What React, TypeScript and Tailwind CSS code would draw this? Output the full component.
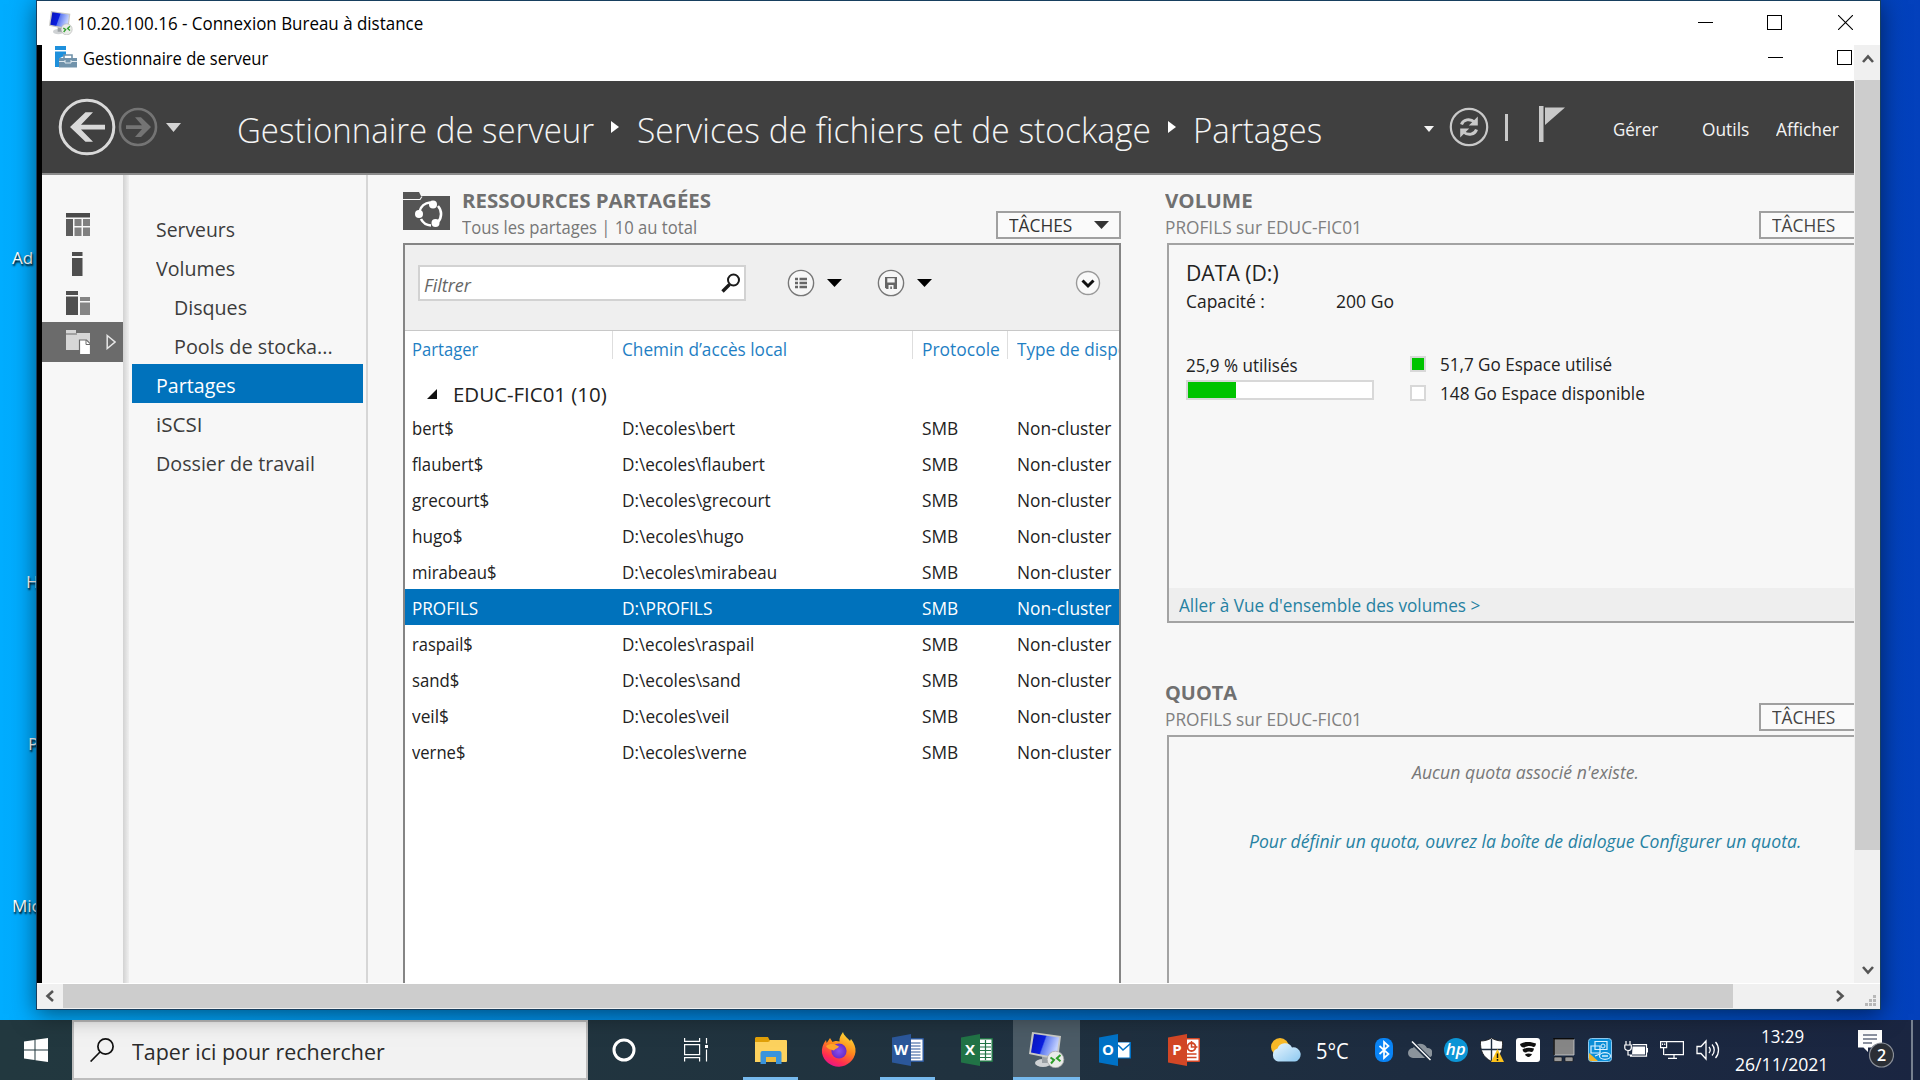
import { useLayoutEffect, useRef, useState } from "react";
import type { ReactNode } from "react";

/* Text run that is condensed or stretched to a given width. */
function T({ w, className = "", children }: { w: number; className?: string; children: ReactNode }) {
  const ref = useRef<HTMLSpanElement>(null);
  const [scale, setScale] = useState(1);
  useLayoutEffect(() => {
    if (ref.current && ref.current.offsetWidth > 0) setScale((w + 1.5) / ref.current.offsetWidth);
  }, [w]);
  return (
    <span className={`block shrink-0 whitespace-nowrap ${className}`} style={{ width: w }}>
      <span ref={ref} className="-ml-px inline-block origin-left" style={{ transform: `scaleX(${scale})` }}>
        {children}
      </span>
    </span>
  );
}

function Caret({ className = "" }: { className?: string }) {
  return (
    <svg viewBox="0 0 14 8" className={`shrink-0 ${className}`} preserveAspectRatio="none" fill="currentColor">
      <path d="M0 0h14L7 8z" />
    </svg>
  );
}

function RdpIcon({ className }: { className: string }) {
  return (
    <svg viewBox="0 0 36 36" className={className}>
      <defs>
        <linearGradient id="scr" x1="0" y1="0" x2="1" y2="0.3">
          <stop offset="0" stopColor="#0a14b4" />
          <stop offset="0.5" stopColor="#0a1ee0" />
          <stop offset="0.55" stopColor="#5c78f0" />
          <stop offset="1" stopColor="#c4d2ff" />
        </linearGradient>
      </defs>
      <ellipse cx="14" cy="31" rx="8" ry="4" fill="#cfd2d4" />
      <path d="M13 24l7 2v5h-7z" fill="#9aa0a4" />
      <path d="M3 0l29 4-3 24L0 22z" fill="#c9c9c4" />
      <path d="M5 2l25 3.600-2.600 20L2 20.500z" fill="url(#scr)" />
      <circle cx="26.500" cy="27.500" r="8.300" fill="#e9ebe8" stroke="#aaa" strokeWidth="0.8" />
      <path d="M21.500 25.500l3.500 2.500-3 3.500M31.500 23l-3.600 3.200 3.600 3" fill="none" stroke="#2f9e2a" strokeWidth="2" />
    </svg>
  );
}

function ManagerIcon() {
  return (
    <svg viewBox="0 0 22 22" className="mt-px h-[22px] w-[22px] shrink-0">
      <path d="M0 0h11v4H0zM0 5.500h11V9L5 12v9H0z" fill="#1e90dc" />
      <path d="M4 12h18v9.500H4z" fill="#7193ab" />
      <path d="M9 12V9h8v3" fill="none" stroke="#7193ab" strokeWidth="1.600" />
      <path d="M4 15.500h6M16 15.500h6M10 14v3h6v-3" fill="none" stroke="#dfe8ee" strokeWidth="1" />
    </svg>
  );
}

const railIcons: ReactNode[] = [
  <svg key="a" viewBox="0 0 24 24" className="h-6 w-6">
    <path d="M0 0h24v4.500H0z" fill="#4a4a4a" />
    <path d="M0 6h7v17H0z" fill="#5c5c5c" />
    <path d="M8.500 6h7v7h-7zM17 6h7v7h-7zM8.500 14.500h7V23h-7zM17 14.500h7V23h-7z" fill="#808080" />
  </svg>,
  <svg key="b" viewBox="0 0 24 24" className="h-6 w-6">
    <path d="M6 0h10.500v4H6zM6 6h10.500v18H6z" fill="#4f4f4f" />
  </svg>,
  <svg key="c" viewBox="0 0 24 24" className="h-6 w-6">
    <path d="M0 0h12v4H0zM0 5.500h12V24H0z" fill="#4f4f4f" />
    <path d="M14 6h10v4H14zM14 11.500h10V24H14z" fill="#858585" />
  </svg>,
];

const nav = [
  { t: "Serveurs", w: 78, c: "pl-[25px] text-[#3c3c3c]" },
  { t: "Volumes", w: 78, c: "pl-[25px] text-[#3c3c3c]" },
  { t: "Disques", w: 72, c: "pl-[43px] text-[#3c3c3c]" },
  { t: "Pools de stocka...", w: 157, c: "pl-[43px] text-[#3c3c3c]" },
  { t: "Partages", w: 78, c: "pl-[25px] bg-[#0072bc] text-white" },
  { t: "iSCSI", w: 45, c: "pl-[25px] text-[#3c3c3c]" },
  { t: "Dossier de travail", w: 158, c: "pl-[25px] text-[#3c3c3c]" },
];

const shares: [string, number, string, number][] = [
  ["bert$", 40, "D:\\ecoles\\bert", 112],
  ["flaubert$", 70, "D:\\ecoles\\flaubert", 141],
  ["grecourt$", 76, "D:\\ecoles\\grecourt", 147],
  ["hugo$", 49, "D:\\ecoles\\hugo", 120],
  ["mirabeau$", 83, "D:\\ecoles\\mirabeau", 154],
  ["PROFILS", 65, "D:\\PROFILS", 89],
  ["raspail$", 59, "D:\\ecoles\\raspail", 131],
  ["sand$", 46, "D:\\ecoles\\sand", 117],
  ["veil$", 35, "D:\\ecoles\\veil", 106],
  ["verne$", 52, "D:\\ecoles\\verne", 123],
];

function MinMax({ close, className }: { close: boolean; className: string }) {
  return (
    <div className={`flex shrink-0 items-center ${className}`}>
      <div className="h-px w-[15px] bg-black" />
      <div className="ml-[54px] h-[15px] w-[15px] border border-black" />
      {close && (
        <svg viewBox="0 0 15 15" className="ml-[56px] h-[15px] w-[15px]" stroke="#000" strokeWidth="1.100">
          <path d="M0 0l15 15M15 0L0 15" />
        </svg>
      )}
    </div>
  );
}

function Header() {
  return (
    <header className="flex h-[94px] shrink-0 items-center border-b-2 border-[#8c8c8c] bg-[#404040] pl-4 text-[#f4f4f4]">
      <svg viewBox="0 0 58 58" className="h-[58px] w-[58px] shrink-0" fill="none">
        <circle cx="29" cy="29" r="26.800" stroke="#d9d9d9" strokeWidth="3" />
        <path d="M47 26.800v4.600H23l12 12.300h-7.500L12 29l15.500-14.700H35L23 26.800z" fill="#d9d9d9" />
      </svg>
      <svg viewBox="0 0 40 40" className="ml-[2px] h-10 w-10 shrink-0" fill="none">
        <circle cx="20" cy="20" r="18" stroke="#747474" strokeWidth="2.600" />
        <path d="M8 18.300v3.600h16l-7 8h6L33 20l-10-9.800h-6l7 8.100z" fill="#747474" />
      </svg>
      <Caret className="ml-2 h-[9px] w-[15px] text-[#d4d4d4]" />
      <T w={356} className="ml-[57px] pt-[6px] text-[35px] leading-[44px] font-light">Gestionnaire de serveur</T>
      <svg viewBox="0 0 8 12" className="ml-[17px] h-3 w-2 shrink-0" fill="#fff"><path d="M0 0l8 6-8 6z" /></svg>
      <T w={512} className="ml-[19px] pt-[6px] text-[35px] leading-[44px] font-light">Services de fichiers et de stockage</T>
      <svg viewBox="0 0 8 12" className="ml-[18px] h-3 w-2 shrink-0" fill="#fff"><path d="M0 0l8 6-8 6z" /></svg>
      <T w={128} className="ml-[18px] pt-[6px] text-[35px] leading-[44px] font-light">Partages</T>
      <Caret className="ml-[102px] mt-1 h-[6px] w-[10px]" />
      <svg viewBox="0 0 40 40" className="ml-[15px] h-10 w-10 shrink-0" fill="none">
        <circle cx="20" cy="20" r="18.200" stroke="#c9c9c9" strokeWidth="2.200" />
        <path d="M12.500 17.500c1.500-5 8.500-6.500 13-2.500M27.500 22.500c-1.500 5-8.500 6.500-13 2.500" stroke="#c9c9c9" strokeWidth="3" />
        <path d="M28.800 9.500v9h-9zM11.200 30.500v-9h9z" fill="#c9c9c9" />
      </svg>
      <div className="ml-4 h-[27px] w-[3px] bg-[#c9c9c9]" />
      <svg viewBox="0 0 26 36" className="-mt-1.5 ml-[31px] h-9 w-[26px] shrink-0" fill="#c9c9c9">
        <path d="M0 0h4.500v36H0zM6 1.500h20L6 19z" />
      </svg>
      <T w={44} className="ml-[49px] pt-[4px] text-[17.500px]">Gérer</T>
      <T w={46} className="ml-[45px] pt-[4px] text-[17.500px]">Outils</T>
      <T w={61} className="ml-[28px] pt-[4px] text-[17.500px]">Afficher</T>
    </header>
  );
}

function Sidebar() {
  return (
    <>
      <div className="flex w-[81px] shrink-0 flex-col bg-[#f7f7f7] pt-[38px]">
        {railIcons.map((icon, i) => (
          <div key={i} className="flex h-[39px] pl-6">{icon}</div>
        ))}
        <div className="-mt-[8px] flex h-10 items-center bg-[#6b6b6b] pl-6">
          <svg viewBox="0 0 24 24" className="h-6 w-6">
            <path d="M0 0h10v3h14v17H0z" fill="#d6d6d6" />
            <path d="M0 4h11" stroke="#6b6b6b" strokeWidth="1" />
            <path d="M13.500 10h7l4 4v10.500h-11z" fill="#fff" stroke="#6b6b6b" strokeWidth="1.200" />
            <path d="M20 10v4.500h4" fill="none" stroke="#6b6b6b" strokeWidth="1" />
          </svg>
          <svg viewBox="0 0 10 16" className="ml-4 h-4 w-[10px]" fill="none" stroke="#e6e6e6" strokeWidth="1.500">
            <path d="M1.200 1.500L9 8l-7.800 6.500z" />
          </svg>
        </div>
      </div>
      <div className="w-[6px] shrink-0 bg-linear-to-r from-[#d2d2d2] to-[#efefef]" />
      <nav className="w-[239px] shrink-0 border-r-2 border-[#d6d6d6] bg-[#f7f7f7] px-[3px] pt-[33px]">
        {nav.map((n) => (
          <div key={n.t} className={`flex h-[39px] items-center pt-[5px] text-[19.500px] leading-[34px] ${n.c}`}>
            <T w={n.w}>{n.t}</T>
          </div>
        ))}
      </nav>
    </>
  );
}

function ListPanel() {
  return (
    <section className="ml-[35px] flex w-[718px] shrink-0 flex-col">
      <div className="flex h-[68px] shrink-0">
        <svg viewBox="0 0 47 38" className="mt-[17px] h-[38px] w-[47px] shrink-0">
          <path d="M0 0h16l2 4h29v34H0z" fill="#555" />
          <path d="M0 7.500h17l2-3" fill="none" stroke="#f7f7f7" strokeWidth="1.200" />
          <path d="M27 10.500a12 12 0 0 0-10.500 9M18 27a12 12 0 0 0 10 6.500M35 30a12 12 0 0 0 0-16" fill="none" stroke="#fff" strokeWidth="2.600" />
          <circle cx="30" cy="12.500" r="4" fill="#fff" />
          <circle cx="16" cy="22" r="4" fill="#fff" />
          <circle cx="32.500" cy="31" r="4" fill="#fff" />
        </svg>
        <div className="mt-[12px] ml-[13px] w-[533px]">
          <T w={248} className="text-[19.500px] leading-7 font-bold text-[#707070]">RESSOURCES PARTAGÉES</T>
          <T w={234} className="text-[18px] leading-6 text-[#777]">Tous les partages | 10 au total</T>
        </div>
        <div className="mt-[36px] flex h-[28px] w-[125px] items-center border-2 border-[#a0a0a0] bg-[#fafafa] pl-[12px] text-[#333]">
          <T w={62} className="text-[18px] leading-6">TÂCHES</T>
          <Caret className="ml-[22px] h-2 w-[15px]" />
        </div>
      </div>
      <div className="flex flex-1 flex-col overflow-hidden border-x-2 border-t-2 border-[#858585] bg-white">
        <div className="flex h-[86px] shrink-0 items-center border-b border-[#c8c8c8] bg-[#efefef] pr-[18px] pb-[9px] pl-[13px]">
          <div className="flex h-9 w-[328px] shrink-0 items-center border-2 border-[#d2d2d2] bg-white pr-[3px] pl-[5px]">
            <T w={46} className="pt-[3px] text-[17.500px] leading-7 text-[#666] italic">Filtrer</T>
            <svg viewBox="0 0 20 20" className="ml-auto h-5 w-5" fill="none" stroke="#1a1a1a">
              <circle cx="12.500" cy="7" r="5.500" strokeWidth="2" />
              <path d="M8.500 11.500L1.500 18.500" strokeWidth="3.400" />
            </svg>
          </div>
          <svg viewBox="0 0 28 28" className="ml-[41px] h-7 w-7 shrink-0">
            <circle cx="14" cy="14" r="12.600" fill="#f6f6f6" stroke="#777" strokeWidth="1.400" />
            <path d="M8 10h3M8 14h3M8 18h3M12.500 10H20M12.500 14H20M12.500 18H20" stroke="#666" strokeWidth="2.400" />
          </svg>
          <Caret className="ml-[12px] h-2 w-[15px]" />
          <svg viewBox="0 0 28 28" className="ml-[35px] h-7 w-7 shrink-0">
            <circle cx="14" cy="14" r="12.600" fill="#f6f6f6" stroke="#777" strokeWidth="1.400" />
            <path d="M8 8h12v12H9.500L8 18.500z" fill="#666" />
            <path d="M10.300 9.200h7.400v4.300h-7.400zM11.500 16h5v4h-1.600v-2.600h-1.600V20h-1.800z" fill="#f6f6f6" />
          </svg>
          <Caret className="ml-[12px] h-2 w-[15px]" />
          <svg viewBox="0 0 26 26" className="ml-auto h-[26px] w-[26px] shrink-0" fill="none">
            <circle cx="13" cy="13" r="11.500" fill="#f9f9f9" stroke="#999" strokeWidth="1.400" />
            <path d="M7.500 10.500l5.500 5.500 5.500-5.500" stroke="#111" strokeWidth="3" />
          </svg>
        </div>
        <div className="flex h-9 shrink-0 text-[18px] leading-[36px] text-[#1f7fc4]">
          <div className="flex h-7 w-[208px] shrink-0 border-r border-[#dedede] pl-2"><T w={65}>Partager</T></div>
          <div className="flex h-7 w-[300px] shrink-0 border-r border-[#dedede] pl-[10px]"><T w={164}>Chemin d’accès local</T></div>
          <div className="flex h-7 w-[95px] shrink-0 border-r border-[#dedede] pl-[10px]"><T w={76}>Protocole</T></div>
          <div className="flex h-7 pl-[10px]"><T w={110}>Type de dispo</T></div>
        </div>
        <div className="flex h-[42px] shrink-0 items-center pt-3 pl-[22px]">
          <svg viewBox="0 0 10 10" className="h-[10px] w-[10px]" fill="#111"><path d="M10 0v10H0z" /></svg>
          <T w={152} className="ml-[17px] text-[20.500px] leading-6 text-[#222]">EDUC-FIC01 (10)</T>
        </div>
        {shares.map(([name, nw, path, pw]) => (
          <div
            key={name}
            className={`flex h-9 shrink-0 items-center pt-[2px] text-[18px] leading-8 ${name === "PROFILS" ? "bg-[#0072bc] text-white" : "text-[#222]"}`}
          >
            <div className="w-[209px] pl-2"><T w={nw}>{name}</T></div>
            <div className="w-[300px] pl-[9px]"><T w={pw}>{path}</T></div>
            <div className="w-[94px] pl-[9px]"><T w={35}>SMB</T></div>
            <div className="pl-[10px]"><T w={93}>Non-cluster</T></div>
          </div>
        ))}
      </div>
    </section>
  );
}

function SideHead({ title, w, className }: { title: string; w: number; className: string }) {
  return (
    <div className={`flex shrink-0 ${className}`}>
      <div className="mt-[12px] w-[592px] shrink-0">
        <T w={w} className="-ml-px text-[19.500px] leading-7 font-bold text-[#707070]">{title}</T>
        <T w={195} className="-ml-px text-[18px] leading-6 text-[#808080]">PROFILS sur EDUC-FIC01</T>
      </div>
      <div className="mt-[36px] flex h-[28px] w-[125px] shrink-0 items-center border-2 border-[#a0a0a0] bg-[#fafafa] pl-[12px] text-[#444]">
        <T w={62} className="text-[18px] leading-6">TÂCHES</T>
      </div>
    </div>
  );
}

function Legend({ color, text, w }: { color: string; text: string; w: number }) {
  return (
    <div className="flex h-[29px] items-center">
      <div className={`h-4 w-4 border-2 border-[#d8d8d8] ${color}`} />
      <T w={w} className="ml-[15px] text-[18px] leading-7">{text}</T>
    </div>
  );
}

function RightColumn() {
  return (
    <section className="ml-[46px] flex w-[720px] shrink-0 flex-col">
      <SideHead title="VOLUME" w={86} className="h-[68px]" />
      <div className="flex h-[380px] shrink-0 flex-col border-2 border-[#a3a3a3] text-[#222]">
        <div className="pt-[13px] pl-[18px]">
          <T w={91} className="text-[21.500px] leading-[29px]">DATA (D:)</T>
          <div className="flex pt-[1px] text-[18px] leading-[26px]">
            <T w={77}>Capacité :</T>
            <T w={56} className="ml-[73px]">200 Go</T>
          </div>
          <div className="flex pt-[35px]">
            <div className="w-[223px] pt-[1px]">
              <T w={110} className="text-[18px] leading-[30px]">25,9 % utilisés</T>
              <div className="-ml-px h-5 w-[188px] border-2 border-[#d8d8d8] bg-white">
                <div className="h-full w-[26%] bg-[#00c400]" />
              </div>
            </div>
            <div>
              <Legend color="bg-[#00c400]" text="51,7 Go Espace utilisé" w={171} />
              <Legend color="bg-white" text="148 Go Espace disponible" w={203} />
            </div>
          </div>
        </div>
        <div className="mt-auto flex h-[33px] items-center bg-[#eee] pl-[11px]">
          <T w={300} className="pt-px text-[18px] leading-8 text-[#2681a2]">Aller à Vue d'ensemble des volumes &gt;</T>
        </div>
      </div>
      <div className="h-[44px] shrink-0" />
      <SideHead title="QUOTA" w={71} className="h-[68px]" />
      <div className="flex-1 border-x-2 border-t-2 border-[#a3a3a3] pt-[18px] text-[18px] leading-[34px] italic">
        <T w={225} className="ml-[244px] text-[#777]">Aucun quota associé n'existe.</T>
        <T w={551} className="mt-[35px] ml-[81px] text-[#2681a2]">Pour définir un quota, ouvrez la boîte de dialogue Configurer un quota.</T>
      </div>
    </section>
  );
}

function Chevron({ d, className = "" }: { d: string; className?: string }) {
  return (
    <svg viewBox="0 0 12 12" className={`h-3 w-3 shrink-0 ${className}`} fill="none" stroke="#555" strokeWidth="2.600">
      <path d={d} />
    </svg>
  );
}

function RemoteWindow() {
  return (
    <div className="relative flex h-[1010px] w-[1845px] flex-col border border-[#173f5f] bg-[#f0f0f0] shadow-[0_4px_22px_rgba(0,0,0,0.5)]">
      <div className="flex h-11 shrink-0 items-center bg-white pl-[12px]">
        <RdpIcon className="h-6 w-6 shrink-0" />
        <T w={345} className="ml-[5px] pt-px text-[18px] text-black">10.20.100.16 - Connexion Bureau à distance</T>
        <MinMax close className="mr-[27px] mb-px ml-auto" />
      </div>
      <div className="flex h-[938px] shrink-0">
        <div className="w-[5px] shrink-0 bg-black" />
        <div className="flex w-[1812px] shrink-0 flex-col overflow-hidden bg-[#f7f7f7]">
          <div className="flex h-9 shrink-0 items-start bg-white pl-[13px]">
            <ManagerIcon />
            <T w={184} className="ml-[7px] text-[18px] leading-[26px] text-black">Gestionnaire de serveur</T>
            <MinMax close={false} className="mt-[5px] mr-[2px] ml-auto" />
          </div>
          <Header />
          <div className="flex min-h-0 flex-1 overflow-hidden">
            <Sidebar />
            <ListPanel />
            <RightColumn />
          </div>
        </div>
        <div className="ml-px flex w-[25px] shrink-0 flex-col items-center bg-[#f0f0f0]">
          <Chevron d="M1 9l5-5.500L11 9" className="mt-[8px]" />
          <div className="mt-[15px] h-[770px] w-full bg-[#cdcdcd]" />
          <Chevron d="M1 3l5 5.500L11 3" className="mt-auto mb-[7px]" />
        </div>
      </div>
      <div className="flex h-[25px] shrink-0 items-center border-t border-white">
        <Chevron d="M9 1L3.500 6 9 11" className="ml-[7px]" />
        <div className="ml-[7px] h-full w-[1670px] bg-[#cdcdcd]" />
        <Chevron d="M3 1l5.500 5L3 11" className="ml-[101px]" />
        <svg viewBox="0 0 12 12" className="mt-2 ml-auto mr-1 h-3 w-3" fill="#b8b8b8">
          <path d="M9 1h3v3H9zM5 5h3v3H5zM9 5h3v3H9zM1 9h3v3H1zM5 9h3v3H5zM9 9h3v3H9z" />
        </svg>
      </div>
    </div>
  );
}

function OfficeIcon({ letter, dark, light, children, className }: { letter: string; dark: string; light: string; children: ReactNode; className: string }) {
  return (
    <svg viewBox="0 0 32 32" className={`h-8 w-8 shrink-0 ${className}`}>
      <rect x="17" y="4" width="15" height="24" rx="1" fill={light} />
      {children}
      <path d="M0 3.500L19 0v32L0 28.500z" fill={dark} />
      <text x="9" y="21" textAnchor="middle" fill="#fff" fontFamily="Open Sans, sans-serif" fontWeight="700" fontSize="15">{letter}</text>
    </svg>
  );
}

function Taskbar() {
  return (
    <footer className="flex h-[60px] w-full shrink-0 items-center overflow-hidden bg-linear-to-r from-[#22383f] via-[#20323f] to-[#1a2541] text-white">
      <div className="flex w-[72px] shrink-0 pl-6">
        <svg viewBox="0 0 24 24" className="h-6 w-6" fill="#fff">
          <path d="M0 3.500l10.500-1.500v9.500H0zM11.500 1.800L24 0v11.500H11.500zM0 12.500h10.500V22L0 20.500zM11.500 12.500H24V24l-12.500-1.800z" />
        </svg>
      </div>
      <div className="flex h-full w-[516px] shrink-0 items-center border-2 border-[#bdbdbd] bg-[#f2f2f2] pl-4">
        <svg viewBox="0 0 24 24" className="h-6 w-6" fill="none" stroke="#111" strokeWidth="1.700">
          <circle cx="15.500" cy="8.500" r="7.600" />
          <path d="M10 14L.6 23.500" />
        </svg>
        <T w={251} className="ml-[19px] pt-[3px] text-[22px] text-[#2b2b2b]">Taper ici pour rechercher</T>
      </div>
      <svg viewBox="0 0 24 24" className="ml-6 h-6 w-6 shrink-0" fill="none" stroke="#fff" strokeWidth="3">
        <circle cx="12" cy="12" r="10" />
      </svg>
      <svg viewBox="0 0 24 24" className="ml-12 h-6 w-6 shrink-0" fill="none" stroke="#fff" strokeWidth="1.200">
        <path d="M.6 0v3.400h15V0M.6 6.600h15v10H.6zM.6 23.500v-3.800h15v3.800M22.500 0v5.500M22.500 11.500v12" />
        <path d="M21 7h3v3h-3z" fill="#fff" stroke="none" />
      </svg>
      <div className="ml-[35px] flex h-full w-[55px] shrink-0 items-center justify-center border-b-[3px] border-[#76b9ed] pt-[3px]">
        <svg viewBox="0 0 32 27" className="h-[27px] w-8">
          <path d="M0 3h31a1 1 0 0 1 1 1v20a1 1 0 0 1-1 1H0z" fill="#fdd25e" />
          <path d="M1 0h12l2 4-2 1H0V1z" fill="#e0a008" />
          <path d="M5.500 27V16a2 2 0 0 1 2-2h17a2 2 0 0 1 2 2v11h-5.500v-7H11v7z" fill="#3a94dc" />
          <path d="M11 20h10v5H11z" fill="#eebb3c" />
        </svg>
      </div>
      <svg viewBox="0 0 36 36" className="ml-[23px] h-9 w-9 shrink-0">
        <defs>
          <linearGradient id="ff" x1="0.800" y1="0" x2="0.300" y2="1">
            <stop offset="0" stopColor="#ffe63c" />
            <stop offset="0.450" stopColor="#ff8a1c" />
            <stop offset="0.800" stopColor="#ff2d50" />
            <stop offset="1" stopColor="#e6148c" />
          </linearGradient>
          <radialGradient id="ffp"><stop offset="0" stopColor="#8a50f0" /><stop offset="1" stopColor="#6a2cc8" /></radialGradient>
        </defs>
        <path d="M22 0c1 4 5 6 7 9l1-2c3 4 5 8 4.500 13A17 17 0 0 1 1 21c-.6-5 1-9 4-13l.7 3L9 6l2.500 4c3-1.500 5-1 7-.500C18 6 20 3 22 0z" fill="url(#ff)" />
        <circle cx="18" cy="19" r="7.600" fill="url(#ffp)" />
        <path d="M5 14c4-3 8-2 10-1l3 1.500c-1 2-4 2-5 4-3-1-6-1-8-4.500z" fill="#ffa42a" />
      </svg>
      <div className="ml-[23px] flex h-full w-[55px] shrink-0 items-center justify-center border-b-[3px] border-[#76b9ed] pt-[3px]">
        <OfficeIcon letter="W" dark="#2b579a" light="#2b579a" className="">
          <path d="M19 5.500h11.500v21H19z" fill="#fff" />
          <path d="M19 9h9.500M19 12h9.500M19 15h9.500M19 18h9.500M19 21h9.500M19 24h9.500" stroke="#2b579a" strokeWidth="1.200" />
        </OfficeIcon>
      </div>
      <OfficeIcon letter="X" dark="#217346" light="#217346" className="ml-[26px]">
        <path d="M19 5.500h11.500v21H19z" fill="#fff" />
        <path d="M19 9.500h11M19 13h11M19 16.500h11M19 20h11M19 23.500h11M24.500 6v20" stroke="#217346" strokeWidth="1.200" />
      </OfficeIcon>
      <div className="ml-5 flex h-full w-[67px] shrink-0 items-center justify-center border-b-[3px] border-[#76b9ed] bg-[#4b5b66] pt-[3px]">
        <RdpIcon className="h-9 w-9" />
      </div>
      <OfficeIcon letter="O" dark="#0072c6" light="#0072c6" className="ml-[19px]">
        <path d="M17 0h15v8H17zM17 24.500h15V32H17z" fill="#202f3f" />
        <path d="M19 8.500h11.500v15H19z" fill="#fff" />
        <path d="M19 11l5 5 7-6" fill="none" stroke="#0072c6" strokeWidth="1.600" />
      </OfficeIcon>
      <OfficeIcon letter="P" dark="#d24726" light="#d24726" className="ml-[37px]">
        <path d="M19 5.500h11.500v21H19z" fill="#fff" />
        <circle cx="23.500" cy="13" r="4" fill="none" stroke="#d24726" strokeWidth="1.800" />
        <path d="M23.500 7v6h6M19 20h9.500M19 23.500h9.500" fill="none" stroke="#d24726" strokeWidth="1.500" />
      </OfficeIcon>
      <svg viewBox="0 0 30 24" className="ml-[71px] h-6 w-[30px] shrink-0">
        <defs><linearGradient id="cl" x1="0" y1="0" x2="1" y2="1"><stop offset="0" stopColor="#eaf6ff" /><stop offset="1" stopColor="#8cc8f0" /></linearGradient></defs>
        <circle cx="9" cy="9" r="9" fill="#f8b928" />
        <path d="M7 23.500a6.800 6.800 0 0 1-.5-13A8 8 0 0 1 21 9.500a7 7 0 0 1 3 14z" fill="url(#cl)" />
      </svg>
      <T w={31} className="ml-4 pt-[4px] text-[21px]">5°C</T>
      <svg viewBox="0 0 18 24" className="ml-[27px] h-6 w-[18px] shrink-0" fill="none">
        <rect width="18" height="24" rx="8" fill="#0a84f5" />
        <path d="M4.500 8l9 8L9 20V4l4.500 4-9 8" stroke="#fff" strokeWidth="1.700" />
      </svg>
      <svg viewBox="0 0 24 24" className="ml-[15px] h-6 w-6 shrink-0">
        <path d="M5 20a5 5 0 0 1 0-10 8 8 0 0 1 14 0 5 5 0 0 1 1 10z" fill="#8b949c" />
        <path d="M3.500 3.500l19 19" stroke="#1e2d3f" strokeWidth="4" />
        <path d="M4 3.500l18.500 18.500" stroke="#fff" strokeWidth="1.500" />
      </svg>
      <svg viewBox="0 0 24 24" className="ml-3 h-6 w-6 shrink-0">
        <circle cx="12" cy="12" r="12" fill="#0d96d6" />
        <text x="11.800" y="17" textAnchor="middle" fill="#fff" fontFamily="Open Sans, sans-serif" fontStyle="italic" fontWeight="600" fontSize="17">hp</text>
      </svg>
      <svg viewBox="0 0 24 24" className="ml-3 h-6 w-6 shrink-0">
        <path d="M11.500 0c3 2 7 3 11 3 .5 10-2 16-11 20.500C3 19 .2 13 .5 3c4 0 8-1 11-3z" fill="#fff" stroke="#111" strokeWidth="0.800" />
        <path d="M11.500 1v22M1 11.500h21" stroke="#1e2d3f" strokeWidth="1.400" />
        <path d="M17.500 11L24 24H11z" fill="#fcc21b" />
        <path d="M17.500 15.500v4.500M17.500 21v1.800" stroke="#111" strokeWidth="1.500" />
      </svg>
      <svg viewBox="0 0 24 24" className="ml-3 h-6 w-6 shrink-0">
        <rect width="24" height="24" rx="3" fill="#fff" />
        <path d="M4 6c5-3 11-2.500 16-.500-.3 2.500-1 3.500-2.500 3.500-3-1.500-6-1.500-9 .5C6 10 4.500 8.500 4 6zM6.500 11.500c4-2.500 8-2 11.500-1-.5 2.500-1.200 3.500-2.500 3.500-2-1-4-.7-5.500.5-2 .3-3-1-3.500-3zM9 16.500c2-1.500 4.500-1.200 7-.5-.8 1.800-2 2.800-3.500 3-1.500-.3-3-1.200-3.500-2.500z" fill="#111" />
      </svg>
      <svg viewBox="0 0 24 24" className="ml-3 h-6 w-6 shrink-0">
        <path d="M2 1h20v16H2z" fill="#868686" stroke="#cfcfcf" strokeWidth="0.800" />
        <path d="M2 17V.7h20" fill="none" stroke="#0b0b0b" strokeWidth="1.500" />
        <rect x="2" y="19" width="8" height="4.500" rx="1" fill="#999" stroke="#111" strokeWidth="0.600" />
        <rect x="13" y="19" width="8" height="4.500" rx="1" fill="#999" stroke="#111" strokeWidth="0.600" />
      </svg>
      <svg viewBox="0 0 24 24" className="ml-3 h-6 w-6 shrink-0" fill="none">
        <rect x="0.500" y="0.500" width="23" height="23" rx="3" fill="#0c8fd8" stroke="#8fc9ee" />
        <path d="M1 15l9 8H3a2 2 0 0 1-2-2z" fill="#f0b429" />
        <path d="M7 3.500h12v8H7zM3 8h9v7H3zM7 18l5-2" stroke="#d8f0ff" strokeWidth="1.200" />
        <circle cx="15" cy="8" r="2" stroke="#d8f0ff" />
        <ellipse cx="17" cy="18" rx="5.500" ry="3.300" stroke="#d8f0ff" strokeWidth="1.200" />
        <path d="M14 18h6" stroke="#d8f0ff" strokeWidth="1.500" />
      </svg>
      <svg viewBox="0 0 24 24" className="ml-3 h-6 w-6 shrink-0" fill="none" stroke="#fff" strokeWidth="1.200">
        <path d="M8.500 6.600h14v11.500H6M23.500 10v4.500M2 3v4M6 3v4M.8 7h6.500v3c0 1.500-1.500 2.500-3.200 2.500S.8 11.500.8 10zM4 12.500V17h4" />
        <path d="M8.500 8.500h12.500v8H8z" fill="#fff" stroke="none" />
      </svg>
      <svg viewBox="0 0 24 24" className="ml-3 h-6 w-6 shrink-0" fill="none" stroke="#fff" strokeWidth="1.200">
        <path d="M7 3.600h16.400v13H4.500M14 16.600v3.500M8 20.400h9M.6 3.600h6v6h-6zM3.600 9.600v7.500M2.500 5.500v1.500M4.700 5.500v1.500" />
      </svg>
      <svg viewBox="0 0 24 24" className="ml-3 h-6 w-6 shrink-0" fill="none" stroke="#fff" strokeWidth="1.300">
        <path d="M1 8.500h4l5-5.500v18l-5-5.500H1zM13 9c1.500 1.800 1.500 4.200 0 6M16 6.500c3 3 3 8 0 11M19.500 4c4 4.500 4 11.500 0 16" />
      </svg>
      <div className="ml-4 flex w-[92px] shrink-0 flex-col items-center text-[17.500px] leading-7">
        <T w={42} className="ml-px">13:29</T>
        <T w={92}>26/11/2021</T>
      </div>
      <svg viewBox="0 0 36 40" className="ml-[30px] h-10 w-9 shrink-0">
        <path d="M0 1h24v18.500H10V24l-4.500-4.500H0z" fill="#fff" transform="translate(0 -2)" />
        <path d="M5 5h14M5 9h14M5 13h9" stroke="#1b2742" strokeWidth="1.200" />
        <circle cx="23.500" cy="25" r="12" fill="#2b2f36" stroke="#8a8f98" strokeWidth="1.200" />
        <text x="23.500" y="31" textAnchor="middle" fill="#fff" fontFamily="Open Sans, sans-serif" fontWeight="600" fontSize="16">2</text>
      </svg>
      <div className="ml-[17px] h-full w-[2px] shrink-0 bg-[#76808f]" />
    </footer>
  );
}

const labels = [
  { t: "Ad", c: "left-[12px] top-[246px]" },
  { t: "H", c: "left-[26px] top-[570px]" },
  { t: "P", c: "left-[28px] top-[732px]" },
  { t: "Mic", c: "left-[12px] top-[894px]" },
];

export default function App() {
  return (
    <div className="relative flex h-[1080px] w-[1920px] flex-col overflow-hidden bg-linear-to-r from-[#00adff] via-[#0070d0] via-60% to-[#0340bc] font-['Open_Sans',sans-serif]">
      {labels.map((l) => (
        <span key={l.t} className={`absolute text-[17px] leading-6 text-white [text-shadow:1px_2px_2px_#000] ${l.c}`}>{l.t}</span>
      ))}
      <div className="flex h-[1020px] shrink-0 pl-9">
        <RemoteWindow />
      </div>
      <Taskbar />
    </div>
  );
}
